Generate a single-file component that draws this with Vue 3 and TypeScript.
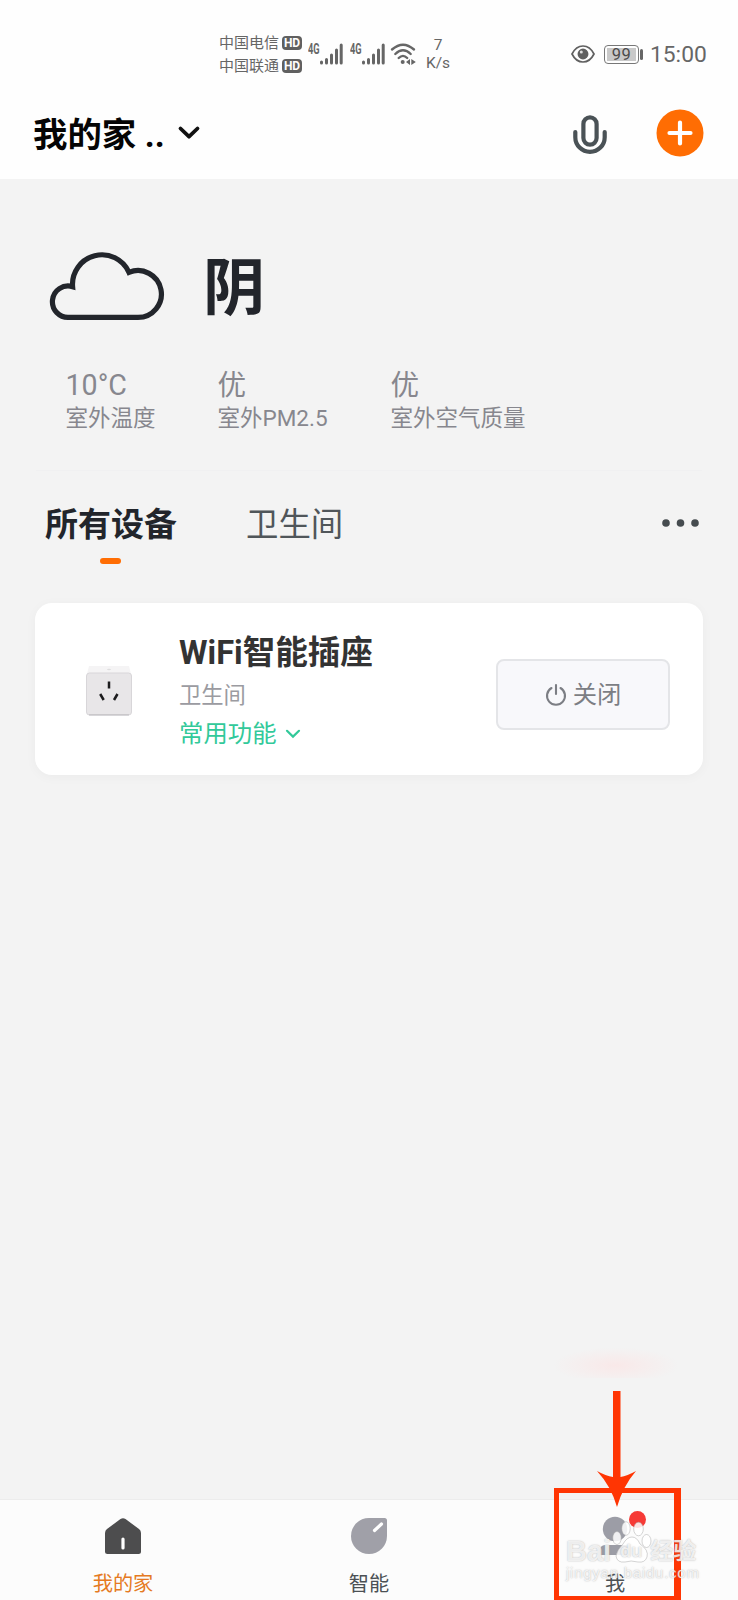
<script setup lang="ts">
interface Reading { value: string; label: string }
const readings: Reading[] = [
  { value: '10°C', label: '室外温度' },
  { value: '优', label: '室外PM2.5' },
  { value: '优', label: '室外空气质量' },
]
const carriers: string[] = ['中国电信', '中国联通']
</script>

<template>
  <div class="phone">
    <header class="top">
      <div class="status">
        <div class="carriers">
          <div v-for="c in carriers" :key="c" class="carrier">{{ c }}<span class="hd">HD</span></div>
        </div>
        <div v-for="n in 2" :key="n" class="signal">
          <span class="net">4G</span>
          <svg width="23" height="22" viewBox="0 0 23 22" stroke="#666" stroke-width="3" stroke-linecap="round">
            <path d="M1.5 19v1M6.5 16.5v3.5M11.5 12v8M16.5 7v13M21.2 2v18" />
          </svg>
        </div>
        <svg class="wifi" width="27" height="22" viewBox="0 0 27 22" fill="none" stroke="#666" stroke-width="2.4" stroke-linecap="round">
          <path d="M2 6.5Q13 -3.2 24 6.5M5.3 11Q13 3.5 20.7 11M8.7 15Q13 10.7 17.2 15" />
          <circle cx="12.7" cy="19" r="2" fill="#666" stroke="none" />
          <path d="M20 16v6l-4-3zM21.3 16v6l4.5-3z" fill="#666" stroke="none" />
        </svg>
        <div class="speed"><span>7</span><span>K/s</span></div>
        <svg class="eye" width="24" height="18" viewBox="0 0 24 18" fill="none" stroke="#606060" stroke-width="1.7">
          <path d="M1 9Q5 1 12 1T23 9Q19 17 12 17T1 9Z" />
          <circle cx="12" cy="9" r="4.6" fill="#606060" />
          <circle cx="10.3" cy="7" r="1.5" fill="#ddd" stroke="none" />
        </svg>
        <div class="battery"><span>99</span></div><i class="cap"></i>
        <span class="clock">15:00</span>
      </div>
      <div class="bar">
        <h1>我的家 ..</h1>
        <svg class="chev" width="22" height="14" viewBox="0 0 22 14" fill="none" stroke="#111" stroke-width="3.8" stroke-linecap="round" stroke-linejoin="round"><path d="M2.5 2.5L11 10.7L19.5 2.5" /></svg>
        <svg class="mic" width="34" height="40" viewBox="0 0 34 40" fill="none" stroke="#4a5256" stroke-width="4.2" stroke-linecap="round">
          <rect x="10.4" y="2.3" width="13.2" height="27.4" rx="6.6" />
          <path d="M2.3 17v5.2a14.7 14.7 0 0 0 29.4 0V17" />
        </svg>
        <svg width="48" height="48" viewBox="0 0 48 48" stroke="#fff" stroke-width="4.2" stroke-linecap="round"><circle cx="24" cy="24" r="23.5" fill="#ff6d03" stroke="none" /><path d="M13.5 24h21M24 13.5v21" /></svg>
      </div>
    </header>

    <main>
      <section class="weather">
        <svg width="115" height="70" viewBox="0 0 115 70" fill="none" stroke="#22252b" stroke-width="5.2">
          <path d="M19.3 65.4H88A23.4 23.4 0 1 0 79 20.4A29.5 29.5 0 0 0 22.6 34.7A15.7 15.7 0 1 0 19.3 65.4Z" />
        </svg>
        <strong>阴</strong>
      </section>
      <section class="readings">
        <div v-for="r in readings" :key="r.label"><b>{{ r.value }}</b><span>{{ r.label }}</span></div>
      </section>
      <nav class="tabs">
        <div class="tab active">所有设备<i></i></div>
        <div class="tab">卫生间</div>
        <svg width="38" height="8" viewBox="0 0 38 8" fill="#454b4f"><circle cx="4" cy="4" r="3.8" /><circle cx="18.5" cy="4" r="3.8" /><circle cx="33" cy="4" r="3.8" /></svg>
      </nav>
      <article class="card">
        <svg class="socket" width="48" height="52" viewBox="0 0 48 52">
          <path d="M4 1h40l2 8v10H2V9z" fill="#f5f4f5" />
          <ellipse cx="24" cy="4.5" rx="2" ry=".8" fill="#deddde" />
          <rect x="1.5" y="8" width="45" height="42" rx="3" fill="#e8e6e8" stroke="#d8d6d9" />
          <path d="M4 49.8h40" stroke="#c3c1c5" stroke-width="1.2" />
          <path d="M24 16.5v7M15.2 29l3.5 6M32.5 29l-3.5 6" stroke="#1c1c1e" stroke-width="2.5" />
        </svg>
        <div class="device">
          <h2>WiFi智能插座</h2>
          <p>卫生间</p>
          <div class="common">常用功能<svg width="16" height="10" viewBox="0 0 16 10" fill="none" stroke="#32c99a" stroke-width="2.2" stroke-linecap="round"><path d="M2 1.8L8 7.6L14 1.8" /></svg></div>
        </div>
        <button type="button">
          <svg width="22" height="24" viewBox="0 0 22 24" fill="none" stroke="#7c7e84" stroke-width="2.1" stroke-linecap="round"><path d="M6.5 5A9 9 0 1 0 15.5 5M11 2v9" /></svg>
          <span>关闭</span>
        </button>
      </article>
    </main>

    <footer>
      <div class="item home">
        <svg width="38" height="38" viewBox="0 0 38 38"><path d="M3 12L16.5 2Q19 .4 21.5 2L35 12Q37 13.6 37 16V34.5Q37 37 34.5 37H3.5Q1 37 1 34.5V16Q1 13.6 3 12Z" fill="#4d4d4e" /><path d="M19 22v9" stroke="#fff" stroke-width="3.2" stroke-linecap="round" /></svg>
        <span>我的家</span>
      </div>
      <div class="item">
        <svg width="38" height="38" viewBox="0 0 38 38"><path d="M19 1H34.5Q37 1 37 3.5V19A18 18 0 1 1 19 1Z" fill="#a0a0a8" /><path d="M24.5 13.5l7-6.5" stroke="#fff" stroke-width="3.2" stroke-linecap="round" /></svg>
        <span>智能</span>
      </div>
      <div class="item">
        <svg width="38" height="38" viewBox="0 0 38 38" fill="#9c9da6"><circle cx="19" cy="12" r="12.2" /><path d="M4 38V34Q4 28 9 28H29Q34 28 34 34V38Z" /></svg>
        <span>我</span>
        <i class="dot"></i>
      </div>
    </footer>

    <div class="glow"></div>
    <div class="frame"></div>
    <svg class="arrow" width="40" height="116" viewBox="0 0 40 116" fill="#ff3503"><path d="M16 0H23.5V86Q30 85 39 80Q26 95 20 116Q14 95 0 80Q9 85 16 86Z" /></svg>
    <div class="watermark">
      <svg width="46" height="48" viewBox="0 0 46 48" fill="#fff" fill-opacity=".85" stroke="#aaa" stroke-opacity=".5"><ellipse cx="11" cy="22" rx="4.2" ry="6.5" /><ellipse cx="20" cy="12.5" rx="4.2" ry="6.8" /><ellipse cx="32.5" cy="13" rx="4.8" ry="6.8" /><ellipse cx="40.5" cy="25" rx="4.5" ry="6.5" /><path d="M26 21Q31 21 34 28Q43 34 41 41Q39 47 32 46Q25 44 19 46Q11 47 10 40Q11 34 17 28Q21 21 26 21Z" /></svg>
      <div class="brand"><span>Bai</span><span class="du">du</span><span class="cn">经验</span></div>
      <div class="url">jingyan.baidu.com</div>
    </div>
  </div>
</template>

<style>
body { margin: 0; }
</style>

<style scoped>
* { box-sizing: border-box; }
.phone { position: relative; display: flex; flex-direction: column; width: 738px; height: 1600px; overflow: hidden; background: #f3f3f3; font-family: Roboto, "Noto Sans CJK SC", sans-serif; color: #22252b; }
svg { display: block; flex: none; overflow: visible; }
.top { height: 179px; background: #fefefe; }
.status { display: flex; align-items: center; height: 88px; padding: 20px 0 0 219px; color: #666; }
.carriers { width: 89px; flex: none; padding-top: 1px; font-size: 15px; line-height: 23px; }
.carrier { display: flex; align-items: center; }
.hd { margin-left: 3px; width: 20px; height: 14px; border-radius: 4px; background: #606060; color: #fff; font-size: 12px; font-weight: 700; line-height: 14.5px; text-align: center; }
.signal { display: flex; width: 41.5px; flex: none; }
.net { width: 12px; font-size: 14px; line-height: 12px; font-weight: 700; transform: scaleX(.66); transform-origin: left; white-space: nowrap; }
.signal svg { margin-left: 0; }
.wifi { margin-left: -1px; }
.speed { display: flex; flex-direction: column; align-items: center; width: 26px; margin-left: 8px; font-size: 15.5px; line-height: 18.5px; }
.eye { margin-left: 120px; }
.battery { width: 35px; height: 19px; margin-left: 9px; padding: 2px; border: 1.5px solid #777; border-radius: 4px; }
.battery span { display: block; height: 13px; background: #c9c9c9; color: #4c4c4c; font-size: 16.5px; line-height: 13.5px; text-align: center; letter-spacing: .5px; }
.cap { width: 3px; height: 11px; margin-left: 1px; border-radius: 1.5px; background: #666; }
.clock { margin-left: 7px; font-size: 22.8px; }
.bar { display: flex; align-items: center; height: 90px; padding-left: 33px; }
h1 { margin: 0; width: 132px; padding-top: 3px; font-size: 34.4px; line-height: 50px; font-weight: 700; color: #050505; white-space: nowrap; }
.chev { margin-left: 13px; }
.mic { margin: 3px 49px 0 373px; }
main { flex: 1; }
.weather { display: flex; align-items: center; height: 140px; margin-top: 38px; padding-left: 50px; }
.weather strong { margin-left: 38px; padding-top: 4px; font-size: 62px; line-height: 76px; font-weight: 700; }
.readings { display: flex; height: 114px; margin: 0 36px; padding: 12px 0 0 29.5px; border-bottom: 1px solid #f0f0f1; color: #87878e; }
.readings div { display: flex; flex-direction: column; white-space: nowrap; }
.readings div:nth-child(1) { width: 152px; }
.readings div:nth-child(2) { width: 173px; }
.readings b { font-size: 28.6px; line-height: 33px; font-weight: 400; }
.readings span { font-size: 22.5px; line-height: 33px; }
.tabs { display: flex; align-items: center; height: 106px; padding: 0 38px 0 45px; }
.tab { position: relative; width: 201px; padding-top: 2px; font-size: 32.4px; line-height: 46px; color: #50565a; white-space: nowrap; }
.tab.active { font-size: 33px; font-weight: 700; color: #22252b; }
.tab i { position: absolute; left: 55px; top: 58px; width: 21px; height: 6px; border-radius: 3px; background: #ff6d03; }
.tabs svg { margin: -2px 0 0 auto; }
.card { display: flex; align-items: center; height: 172px; margin: 26px 35px 0; padding: 0 33px 0 50px; border-radius: 17px; background: #fff; box-shadow: 0 2px 12px rgba(0,0,0,.035); }
.socket { margin-top: 3px; }
.device { width: 317px; margin-left: 46px; padding-top: 6px; }
h2 { margin: 0; font-size: 32.6px; line-height: 46px; font-weight: 700; color: #333; white-space: nowrap; }
p { margin: 0; font-size: 22.3px; line-height: 38px; color: #9b9ba1; }
.common { display: flex; align-items: center; font-size: 24.4px; line-height: 40px; color: #32c99a; }
.common svg { margin-left: 8px; }
button { display: flex; align-items: center; justify-content: center; width: 174px; height: 71px; margin: 11px 0 0; padding: 0; border: 2px solid #e4e5e8; border-radius: 8px; background: #f8f8fb; color: #7c7e84; font: 24.3px/34px Roboto, "Noto Sans CJK SC", sans-serif; }
button span { margin-left: 6px; }
footer { display: flex; height: 101px; border-top: 1px solid #ececec; background: #fcfcfc; }
.item { position: relative; display: flex; flex-direction: column; align-items: center; width: 246px; padding-top: 17px; font-size: 20.2px; line-height: 28px; color: #4b5054; }
.item span { margin-top: 15px; }
.home span { color: #e57a22; }
.dot { position: absolute; left: 137px; top: 11px; width: 17px; height: 17px; border-radius: 50%; background: #f63a36; }
.glow { position: absolute; left: 553px; top: 1342px; width: 126px; height: 36px; background: radial-gradient(ellipse 50% 50% at 50% 65%, rgba(255,222,222,.5), rgba(255,230,230,0)); }
.frame { position: absolute; left: 554px; top: 1488px; width: 127px; height: 112px; border: solid #ff3503; border-width: 5px 7px 4px 5px; }
.arrow { position: absolute; left: 597px; top: 1391px; }
.watermark { position: absolute; left: 566px; top: 1516px; width: 136px; height: 68px; color: rgba(255,255,255,.8); font-family: "Liberation Sans", "Noto Sans CJK SC", sans-serif; font-weight: 700; text-shadow: 0 0 1.5px rgba(130,130,130,.65); }
.brand { display: flex; align-items: center; position: absolute; left: 0; top: 15px; font-size: 29px; line-height: 40px; }
.brand .du { width: 39px; padding-left: 9px; font-size: 18px; }
.brand .cn { font-size: 23px; }
.watermark svg { position: absolute; left: 40px; top: 0; }
.url { position: absolute; left: 0; top: 49px; font-size: 15px; line-height: 16px; font-weight: 400; white-space: nowrap; letter-spacing: .75px; }
</style>
